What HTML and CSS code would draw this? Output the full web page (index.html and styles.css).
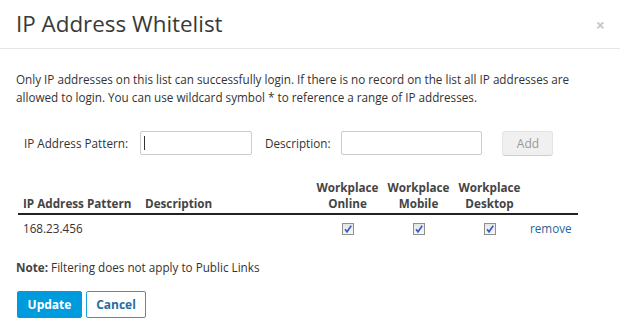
FILE: index.html
```html
<!DOCTYPE html>
<html>
<head>
<meta charset="utf-8">
<link rel="stylesheet" href="styles.css">
</head>
<body>
<div class="modal">
  <div class="modal-header">
    <h1 class="modal-title">IP Address Whitelist</h1>
    <span class="close">&times;</span>
  </div>
  <div class="modal-body">
    <p class="intro">Only IP addresses on this list can successfully login. If there is no record on the list all IP addresses are allowed to login. You can use wildcard symbol * to reference a range of IP addresses.</p>
    <div class="form-row">
      <label class="lbl lbl-ip">IP Address Pattern:</label>
      <span class="input input-ip"><span class="caret"></span></span>
      <label class="lbl lbl-desc">Description:</label>
      <span class="input input-desc"></span>
      <span class="btn-add">Add</span>
    </div>
    <table class="list">
      <colgroup>
        <col class="c1"><col class="c2"><col class="c3"><col class="c3"><col class="c3"><col class="c4">
      </colgroup>
      <thead>
        <tr>
          <th class="left">IP Address Pattern</th>
          <th class="left">Description</th>
          <th>Workplace<br>Online</th>
          <th>Workplace<br>Mobile</th>
          <th>Workplace<br>Desktop</th>
          <th></th>
        </tr>
      </thead>
      <tbody>
        <tr>
          <td class="left">168.23.456</td>
          <td class="left"></td>
          <td><span class="cb"><svg viewBox="0 0 10 10" width="10" height="10"><path d="M2 5.2 L4 7.8 L8.2 1.8" fill="none" stroke="#2f5fc4" stroke-width="1.6"/></svg></span></td>
          <td><span class="cb"><svg viewBox="0 0 10 10" width="10" height="10"><path d="M2 5.2 L4 7.8 L8.2 1.8" fill="none" stroke="#2f5fc4" stroke-width="1.6"/></svg></span></td>
          <td><span class="cb"><svg viewBox="0 0 10 10" width="10" height="10"><path d="M2 5.2 L4 7.8 L8.2 1.8" fill="none" stroke="#2f5fc4" stroke-width="1.6"/></svg></span></td>
          <td class="left"><a class="remove">remove</a></td>
        </tr>
      </tbody>
    </table>
    <p class="note"><b>Note:</b> Filtering does not apply to Public Links</p>
    <div class="footer">
      <span class="btn btn-primary">Update</span>
      <span class="btn btn-default">Cancel</span>
    </div>
  </div>
</div>
</body>
</html>
```
FILE: styles.css
```css
html, body {
  margin: 0;
  padding: 0;
  background: #fff;
}
body {
  font-family: "Open Sans", "DejaVu Sans", sans-serif;
  font-size: 11.7px;
  color: #333;
}
.modal {
  width: 620px;
}
.modal-header {
  display: flex;
  align-items: center;
  justify-content: space-between;
  height: 48px;
  padding: 0 16px;
  border-bottom: 1px solid #e5e5e5;
}
.modal-title {
  margin: 0;
  font-size: 22.4px;
  font-weight: 400;
  color: #3a3a3a;
  line-height: 30px;
}
.close {
  color: #c8c8c8;
  font-size: 16px;
  font-weight: bold;
  line-height: 1;
  margin-right: -1px;
  margin-top: 2px;
}
.modal-body {
  padding: 0 16px;
}
.intro {
  margin: 21px 0 0;
  line-height: 18px;
  width: 580px;
}
.form-row {
  display: flex;
  align-items: center;
  margin-top: 24px;
  padding-left: 8px;
  height: 26px;
}
.lbl {
  white-space: nowrap;
}
.input {
  display: flex;
  align-items: center;
  box-sizing: border-box;
  height: 24px;
  border: 1px solid #ccc;
  border-radius: 2px;
  background: #fff;
}
.input-ip {
  width: 112px;
  margin-left: 12px;
}
.caret {
  width: 1px;
  height: 14px;
  background: #333;
  margin-left: 3px;
}
.lbl-desc {
  margin-left: 13px;
}
.input-desc {
  width: 141px;
  margin-left: 11px;
}
.btn-add {
  display: flex;
  align-items: center;
  justify-content: center;
  box-sizing: border-box;
  width: 51px;
  height: 25px;
  margin-left: 20px;
  background: #f0f0f0;
  border: 1px solid #e3e3e3;
  border-bottom-color: #cfcfcf;
  border-radius: 3px;
  color: #999;
  font-size: 12px;
}
.list {
  table-layout: fixed;
  border-collapse: collapse;
  width: 560px;
  margin: 23px 0 0 2px;
}
.list col.c1 { width: 122px; }
.list col.c2 { width: 172px; }
.list col.c3 { width: 71px; }
.list col.c4 { width: 53px; }
.list th {
  font-weight: bold;
  color: #444;
  line-height: 16px;
  padding: 0 0 2px;
  vertical-align: bottom;
  text-align: center;
  border-bottom: 2px solid #222;
}
.list th.left {
  text-align: left;
  padding-left: 5px;
}
.list td {
  height: 26px;
  padding: 0;
  text-align: center;
  vertical-align: middle;
}
.list td.left {
  text-align: left;
  padding-left: 5px;
}
.cb {
  display: inline-flex;
  align-items: center;
  justify-content: center;
  box-sizing: border-box;
  width: 12px;
  height: 12px;
  border: 1px solid #8e8f8f;
  background: linear-gradient(#e6e6e6, #f6f6f6);
  vertical-align: middle;
  margin-top: -2px;
}
.cb svg {
  display: block;
}
.remove {
  color: #2a6496;
  text-decoration: none;
}
.note {
  margin: 17px 0 0;
  line-height: 18px;
}
.note b {
  color: #444;
}
.footer {
  display: flex;
  gap: 4px;
  margin-top: 15px;
  padding-left: 1px;
}
.btn {
  display: flex;
  align-items: center;
  justify-content: center;
  box-sizing: border-box;
  height: 27px;
  border-radius: 2px;
  font-weight: bold;
  font-size: 12px;
}
.btn-primary {
  width: 65px;
  background: #009bdc;
  border: 1px solid #009bdc;
  color: #fff;
}
.btn-default {
  width: 60px;
  background: #fff;
  border: 1px solid #1a9fd9;
  color: #1e6ea6;
}
```
